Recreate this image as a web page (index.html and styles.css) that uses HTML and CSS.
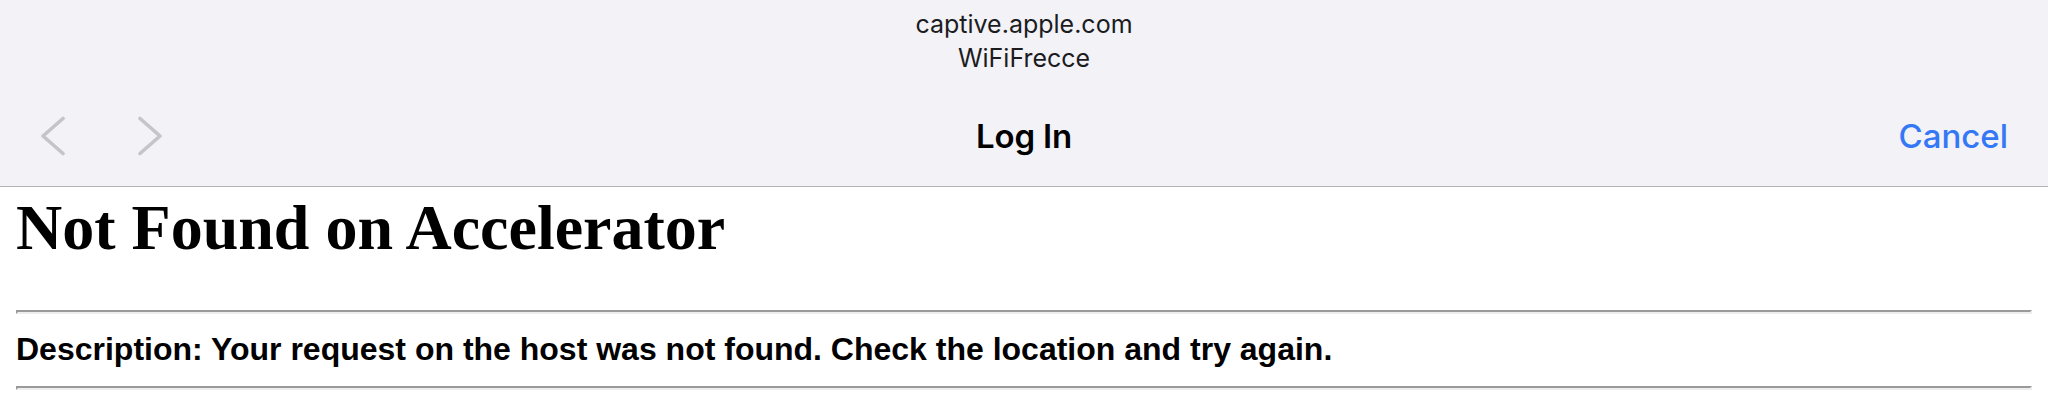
FILE: index.html
```html
<!DOCTYPE html>
<html lang="en">
<head>
<meta charset="utf-8">
<title>Log In</title>
<link rel="stylesheet" href="styles.css">
</head>
<body>
<header class="sheet-header">
  <div class="origin">
    <div class="origin-line">captive.apple.com</div>
    <div class="origin-line">WiFiFrecce</div>
  </div>
  <nav class="nav-row">
    <div class="nav-left">
      <span class="chev chev-back">
        <svg width="24" height="40" viewBox="0 0 24 40"><polyline points="22,2.5 2,20 22,37.5" fill="none" stroke="#c5c5c8" stroke-width="3.6" stroke-linecap="round" stroke-linejoin="round"/></svg>
      </span>
      <span class="chev chev-fwd">
        <svg width="24" height="40" viewBox="0 0 24 40"><polyline points="2,2.5 22,20 2,37.5" fill="none" stroke="#c5c5c8" stroke-width="3.6" stroke-linecap="round" stroke-linejoin="round"/></svg>
      </span>
    </div>
    <div class="nav-title">Log In</div>
    <div class="nav-right"><span class="cancel">Cancel</span></div>
  </nav>
</header>
<main class="page">
  <h1 class="page-title">Not Found on Accelerator</h1>
  <hr class="rule rule-top">
  <p class="desc">Description: Your request on the host was not found. Check the location and try again.</p>
  <hr class="rule">
</main>
</body>
</html>
```

FILE: styles.css
```css
html, body {
  margin: 0;
  padding: 0;
  background: #ffffff;
}

.sheet-header {
  background: #f2f2f7;
  border-bottom: 1px solid #b4b4b8;
  height: 186px;
  box-sizing: content-box;
  display: flex;
  flex-direction: column;
  font-family: "Inter", "Liberation Sans", sans-serif;
  color: #000;
}

.origin {
  padding-top: 7px;
  text-align: center;
  font-size: 25px;
  line-height: 34px;
  color: #1c1c1e;
}

.nav-row {
  margin-top: 41px;
  height: 40px;
  display: grid;
  grid-template-columns: 1fr auto 1fr;
  align-items: center;
}

.nav-left {
  display: flex;
  align-items: center;
  padding-left: 41px;
  gap: 73px;
}

.chev {
  display: flex;
  width: 24px;
  height: 40px;
}

.nav-title {
  font-size: 33px;
  font-weight: 600;
  line-height: 40px;
  letter-spacing: -0.2px;
}

.nav-right {
  display: flex;
  justify-content: flex-end;
  padding-right: 40px;
}

.cancel {
  font-size: 33px;
  line-height: 40px;
  font-weight: 500;
  color: #3478f6;
}

.page {
  padding: 0 16px;
}

.page-title {
  margin: 9px 0 0 0;
  font-family: "Liberation Serif", "Times New Roman", serif;
  font-weight: 700;
  font-size: 64px;
  line-height: 64px;
}

.rule {
  margin: 0;
  height: 0;
  border-style: solid;
  border-width: 2px;
  border-color: #9a9a9a #eeeeee #eeeeee #9a9a9a;
}

.rule-top {
  margin-top: 50px;
}

.desc {
  margin: 17px 0 19px 0;
  font-family: "Liberation Sans", Arial, sans-serif;
  font-weight: 700;
  font-size: 32px;
  line-height: 36px;
}
```
